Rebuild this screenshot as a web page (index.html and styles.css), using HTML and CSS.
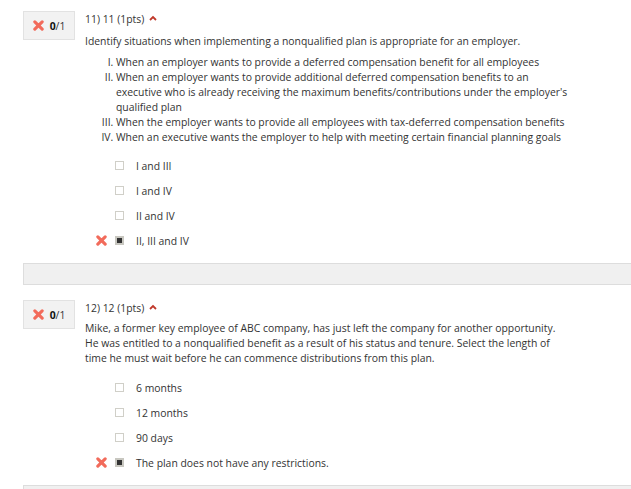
FILE: index.html
```html
<!DOCTYPE html>
<html lang="en">
<head>
    <meta charset="UTF-8">
    <link rel="stylesheet" href="styles.css">
</head>
<body>
    <div class="question">
        <div class="score">
            <svg class="x-icon" width="11" height="11" viewBox="0 0 12 12"><path d="M2 2 L10 10 M10 2 L2 10" stroke="#f26b5b" stroke-width="3.4" stroke-linecap="round"/></svg>
            <b>0</b>/1
        </div>
        <div class="q-body">
            <div class="q-title">11) 11 (1pts) <svg class="caret" width="8" height="6" viewBox="0 0 8 6"><path d="M1 5 L4 2 L7 5" fill="none" stroke="#c0392b" stroke-width="1.8"/></svg></div>
            <p class="q-text">Identify situations when implementing a nonqualified plan is appropriate for an employer.</p>
            <ol class="roman-list">
                <li>When an employer wants to provide a deferred compensation benefit for all employees</li>
                <li>When an employer wants to provide additional deferred compensation benefits to an executive who is already receiving the maximum benefits/contributions under the employer's qualified plan</li>
                <li>When the employer wants to provide all employees with tax-deferred compensation benefits</li>
                <li>When an executive wants the employer to help with meeting certain financial planning goals</li>
            </ol>
            <ul class="options">
                <li><span class="mark"></span><span class="box"></span>I and III</li>
                <li><span class="mark"></span><span class="box"></span>I and IV</li>
                <li><span class="mark"></span><span class="box"></span>II and IV</li>
                <li><span class="mark"><svg width="11" height="11" viewBox="0 0 12 12"><path d="M2 2 L10 10 M10 2 L2 10" stroke="#f26b5b" stroke-width="3.4" stroke-linecap="round"/></svg></span><span class="box checked"></span>II, III and IV</li>
            </ul>
        </div>
    </div>
    <div class="divider"></div>
    <div class="question">
        <div class="score">
            <svg class="x-icon" width="11" height="11" viewBox="0 0 12 12"><path d="M2 2 L10 10 M10 2 L2 10" stroke="#f26b5b" stroke-width="3.4" stroke-linecap="round"/></svg>
            <b>0</b>/1
        </div>
        <div class="q-body">
            <div class="q-title">12) 12 (1pts) <svg class="caret" width="8" height="6" viewBox="0 0 8 6"><path d="M1 5 L4 2 L7 5" fill="none" stroke="#c0392b" stroke-width="1.8"/></svg></div>
            <p class="q-text second">Mike, a former key employee of ABC company, has just left the company for another opportunity. He was entitled to a nonqualified benefit as a result of his status and tenure. Select the length of time he must wait before he can commence distributions from this plan.</p>
            <ul class="options">
                <li><span class="mark"></span><span class="box"></span>6 months</li>
                <li><span class="mark"></span><span class="box"></span>12 months</li>
                <li><span class="mark"></span><span class="box"></span>90 days</li>
                <li><span class="mark"><svg width="11" height="11" viewBox="0 0 12 12"><path d="M2 2 L10 10 M10 2 L2 10" stroke="#f26b5b" stroke-width="3.4" stroke-linecap="round"/></svg></span><span class="box checked"></span>The plan does not have any restrictions.</li>
            </ul>
        </div>
    </div>
    <div class="divider"></div>
</body>
</html>
```

FILE: styles.css
```css
body {
    margin: 0;
    padding: 11px 0 0 23px;
    font-family: "Open Sans", sans-serif;
    font-size: 10.4px;
    color: #333;
    background-color: white;
    overflow: hidden;
}
.question {
    display: flex;
    align-items: flex-start;
}
.score {
    width: 50px;
    height: 27px;
    border: 1px solid #e2e2e2;
    background-color: #f2f2f2;
    display: flex;
    align-items: center;
    justify-content: center;
    color: #333;
    flex-shrink: 0;
}
.score b {
    font-weight: bold;
    color: #111;
}
.x-icon {
    margin-right: 6px;
}
.q-body {
    margin-left: 10px;
    width: 485px;
}
.q-title {
    margin-top: 1px;
    line-height: 14px;
}
.caret {
    margin-left: 2px;
    vertical-align: 2px;
}
.q-text {
    margin: 8px 0 0;
    line-height: 15px;
}
.q-text.second {
    margin-top: 6px;
}
.roman-list {
    list-style-type: upper-roman;
    margin: 6px 0 0;
    padding-left: 31px;
    line-height: 15px;
}
.options {
    list-style-type: none;
    margin: 8px 0 0;
    padding: 0;
}
.q-text.second + .options {
    margin-top: 9px;
}
.options li {
    display: flex;
    align-items: center;
    height: 25px;
}
.mark {
    width: 30px;
    height: 11px;
    display: flex;
    justify-content: flex-end;
    padding-right: 8px;
    box-sizing: border-box;
}
.box {
    width: 7px;
    height: 7px;
    border: 1px solid #d0cfc8;
    margin-right: 12px;
}
.box.checked {
    background-color: #333;
    border: 2px solid #c8c7c0;
    width: 5px;
    height: 5px;
}
.divider {
    height: 20px;
    margin: 10px 0 15px;
    background-color: #f0f0f0;
    border: 1px solid #ddd;
    border-right: none;
}
```
